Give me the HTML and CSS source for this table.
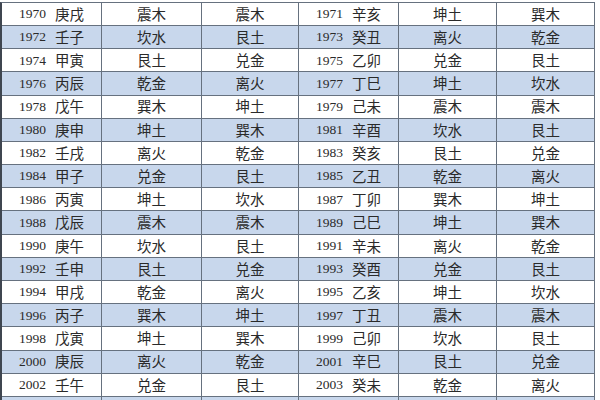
FILE: index.html
```html
<!DOCTYPE html>
<html lang="zh">
<head>
<meta charset="utf-8">
<link rel="stylesheet" href="styles.css">
</head>
<body>
<div class="table">
  <div class="row"><div class="c yg"><span class="y">1970</span><span>庚戌</span></div><div class="c">震木</div><div class="c">震木</div><div class="c yg"><span class="y">1971</span><span>辛亥</span></div><div class="c">坤土</div><div class="c">巽木</div></div>
  <div class="row alt"><div class="c yg"><span class="y">1972</span><span>壬子</span></div><div class="c">坎水</div><div class="c">艮土</div><div class="c yg"><span class="y">1973</span><span>癸丑</span></div><div class="c">离火</div><div class="c">乾金</div></div>
  <div class="row"><div class="c yg"><span class="y">1974</span><span>甲寅</span></div><div class="c">艮土</div><div class="c">兑金</div><div class="c yg"><span class="y">1975</span><span>乙卯</span></div><div class="c">兑金</div><div class="c">艮土</div></div>
  <div class="row alt"><div class="c yg"><span class="y">1976</span><span>丙辰</span></div><div class="c">乾金</div><div class="c">离火</div><div class="c yg"><span class="y">1977</span><span>丁巳</span></div><div class="c">坤土</div><div class="c">坎水</div></div>
  <div class="row"><div class="c yg"><span class="y">1978</span><span>戊午</span></div><div class="c">巽木</div><div class="c">坤土</div><div class="c yg"><span class="y">1979</span><span>己未</span></div><div class="c">震木</div><div class="c">震木</div></div>
  <div class="row alt"><div class="c yg"><span class="y">1980</span><span>庚申</span></div><div class="c">坤土</div><div class="c">巽木</div><div class="c yg"><span class="y">1981</span><span>辛酉</span></div><div class="c">坎水</div><div class="c">艮土</div></div>
  <div class="row"><div class="c yg"><span class="y">1982</span><span>壬戌</span></div><div class="c">离火</div><div class="c">乾金</div><div class="c yg"><span class="y">1983</span><span>癸亥</span></div><div class="c">艮土</div><div class="c">兑金</div></div>
  <div class="row alt"><div class="c yg"><span class="y">1984</span><span>甲子</span></div><div class="c">兑金</div><div class="c">艮土</div><div class="c yg"><span class="y">1985</span><span>乙丑</span></div><div class="c">乾金</div><div class="c">离火</div></div>
  <div class="row"><div class="c yg"><span class="y">1986</span><span>丙寅</span></div><div class="c">坤土</div><div class="c">坎水</div><div class="c yg"><span class="y">1987</span><span>丁卯</span></div><div class="c">巽木</div><div class="c">坤土</div></div>
  <div class="row alt"><div class="c yg"><span class="y">1988</span><span>戊辰</span></div><div class="c">震木</div><div class="c">震木</div><div class="c yg"><span class="y">1989</span><span>己巳</span></div><div class="c">坤土</div><div class="c">巽木</div></div>
  <div class="row"><div class="c yg"><span class="y">1990</span><span>庚午</span></div><div class="c">坎水</div><div class="c">艮土</div><div class="c yg"><span class="y">1991</span><span>辛未</span></div><div class="c">离火</div><div class="c">乾金</div></div>
  <div class="row alt"><div class="c yg"><span class="y">1992</span><span>壬申</span></div><div class="c">艮土</div><div class="c">兑金</div><div class="c yg"><span class="y">1993</span><span>癸酉</span></div><div class="c">兑金</div><div class="c">艮土</div></div>
  <div class="row"><div class="c yg"><span class="y">1994</span><span>甲戌</span></div><div class="c">乾金</div><div class="c">离火</div><div class="c yg"><span class="y">1995</span><span>乙亥</span></div><div class="c">坤土</div><div class="c">坎水</div></div>
  <div class="row alt"><div class="c yg"><span class="y">1996</span><span>丙子</span></div><div class="c">巽木</div><div class="c">坤土</div><div class="c yg"><span class="y">1997</span><span>丁丑</span></div><div class="c">震木</div><div class="c">震木</div></div>
  <div class="row"><div class="c yg"><span class="y">1998</span><span>戊寅</span></div><div class="c">坤土</div><div class="c">巽木</div><div class="c yg"><span class="y">1999</span><span>己卯</span></div><div class="c">坎水</div><div class="c">艮土</div></div>
  <div class="row alt"><div class="c yg"><span class="y">2000</span><span>庚辰</span></div><div class="c">离火</div><div class="c">乾金</div><div class="c yg"><span class="y">2001</span><span>辛巳</span></div><div class="c">艮土</div><div class="c">兑金</div></div>
  <div class="row"><div class="c yg"><span class="y">2002</span><span>壬午</span></div><div class="c">兑金</div><div class="c">艮土</div><div class="c yg"><span class="y">2003</span><span>癸未</span></div><div class="c">乾金</div><div class="c">离火</div></div>
  <div class="row alt"><div class="c yg"><span class="y">2004</span><span>甲申</span></div><div class="c">坤土</div><div class="c">坎水</div><div class="c yg"><span class="y">2005</span><span>乙酉</span></div><div class="c">巽木</div><div class="c">坤土</div></div>
</div>
</body>
</html>
```

FILE: styles.css
```css
html, body {
  margin: 0;
  padding: 0;
  height: 400px;
  overflow: hidden;
  background: #ffffff;
}

body {
  font-family: "Noto Sans CJK SC", "Noto Sans", sans-serif;
  font-size: 14.5px;
  color: #2a2a2a;
}

.table {
  display: flex;
  flex-direction: column;
  gap: 1px;
  width: fit-content;
  margin-top: 1.8px;
  background: #66717f;
  border-top: 1px solid #66717f;
  border-right: 1px solid #66717f;
  border-left: 2px solid #3f4650;
}

.row {
  display: grid;
  grid-template-columns: 99px 99px 96px 99px 97px 97px;
  gap: 1px;
  height: 22.2px;
}

.c {
  display: flex;
  align-items: center;
  justify-content: center;
  background: #ffffff;
  line-height: 1;
}

.row.alt .c {
  background: #c8d7ec;
}

.yg {
  gap: 9px;
}

.y {
  font-family: "Liberation Serif", serif;
  font-size: 13.5px;
  color: #2a2a2a;
}
```
